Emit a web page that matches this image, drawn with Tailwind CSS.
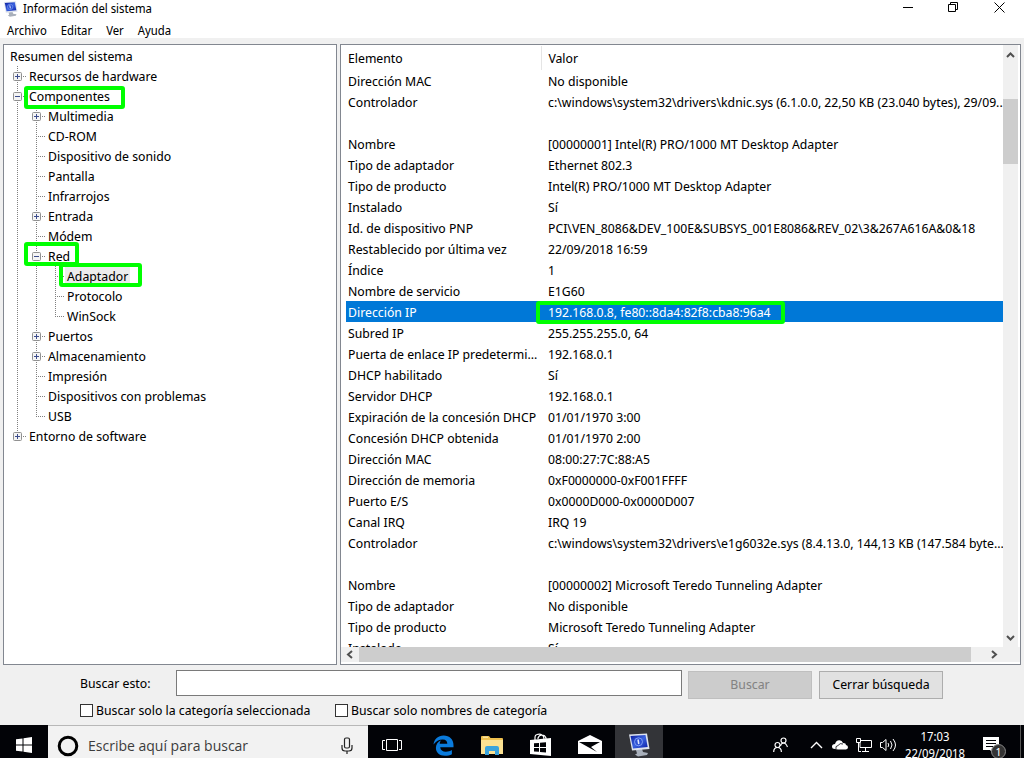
<!DOCTYPE html>
<html lang="es">
<head>
<meta charset="utf-8">
<title>Información del sistema</title>
<script src="https://cdn.jsdelivr.net/npm/@tailwindcss/browser@4"></script>
</head>
<body class="flex h-screen flex-col overflow-hidden bg-[#f0f0f0] font-['Noto_Sans_Display','Open_Sans',sans-serif] text-[13px] text-black">

<svg class="absolute size-0" aria-hidden="true">
  <defs>
    <linearGradient id="screen" x1="0" y1="0" x2="1" y2="1">
      <stop offset="0" stop-color="#0a1c9c"/><stop offset=".5" stop-color="#3a62e0"/><stop offset="1" stop-color="#0a20a8"/>
    </linearGradient>
    <symbol id="pc" viewBox="0 0 22 24">
      <path d="M8 17l6-1 1 3 5 1-1 2-9 1.500-3-2 2-1z" fill="#a9b0bb"/>
      <path d="M1 1.500L19 .5l2.500 15.500L4 17.500z" fill="#dde3ee"/>
      <path d="M2.500 3L17.500 2l2.200 12L5 15.500z" fill="url(#screen)"/>
      <circle cx="10.500" cy="8.800" r="4" fill="#2c50d4" stroke="#7f9df2"/>
      <path d="M10 6.500l.8 4.500" stroke="#dfe7ff" stroke-width="1.500"/>
    </symbol>
    <symbol id="g-v" viewBox="0 0 19 20"><path d="M9.500 0V20" stroke="#808080" stroke-dasharray="1 1"/></symbol>
    <symbol id="g-t" viewBox="0 0 19 20"><path d="M9.500 0V20M9 10.500H18" stroke="#808080" stroke-dasharray="1 1"/></symbol>
    <symbol id="g-l" viewBox="0 0 19 20"><path d="M9.500 0V11M9 10.500H18" stroke="#808080" stroke-dasharray="1 1"/></symbol>
    <symbol id="g-box" viewBox="0 0 19 20"><rect x="5.500" y="6.500" width="8" height="8" rx="1" fill="#f4f4f4" stroke="#919191"/><path d="M7 10.500h5" stroke="#3c4c8c"/></symbol>
    <symbol id="g-plus" viewBox="0 0 19 20"><path d="M9.500 8v5" stroke="#3c4c8c"/></symbol>
  </defs>
</svg>

<header class="bg-white">
  <div class="flex h-[18px] items-center pl-[3px]">
    <svg class="mr-[5px] h-4 w-[15px]"><use href="#pc"/></svg>
    <h1 class="flex-1 text-xs">Información del sistema</h1>
    <div class="flex h-full pr-px">
      <button aria-label="Minimizar" class="flex w-[45px] justify-center"><svg class="h-[15px] w-[11px]" viewBox="0 0 11 15"><path d="M0 7.500h10" stroke="#000"/></svg></button>
      <button aria-label="Restaurar" class="flex w-[45px] justify-center"><svg class="h-[15px] w-[11px]" viewBox="0 0 11 15" fill="none" stroke="#000"><path d="M.5 4.500h7v7h-7zM2.500 4V2.500h7v7H8"/></svg></button>
      <button aria-label="Cerrar" class="flex w-[47px] justify-center"><svg class="h-[15px] w-[11px]" viewBox="0 0 11 15"><path d="M.5 2.500l10 10M10.500 2.500l-10 10" stroke="#000"/></svg></button>
    </div>
  </div>
  <nav class="flex h-5 items-center gap-[14px] pt-[5px] pl-[7px] text-xs">
    <button>Archivo</button><button>Editar</button><button>Ver</button><button>Ayuda</button>
  </nav>
</header>

<main class="flex min-h-0 flex-1 gap-[3px] px-[3px] pt-[6px]">
  <section aria-label="Categorías" class="w-[334px] shrink-0 border border-[#828790] bg-white pt-px">
    <ul id="tree" role="tree"></ul>
  </section>

  <section aria-label="Detalles" class="flex min-w-0 flex-1 flex-col border border-[#828790] bg-white">
    <div class="flex min-h-0 flex-1">
      <div class="min-w-0 flex-1 overflow-hidden pt-px pl-[5px]">
        <table class="w-full table-fixed border-collapse text-left whitespace-nowrap">
          <colgroup><col class="w-[195px]"><col></colgroup>
          <thead><tr class="h-6"><th class="p-0 pt-[2px] pl-[2px] font-normal">Elemento</th><th class="border-l border-[#e5e5e5] p-0 pt-[2px] pl-[7px] font-normal">Valor</th></tr></thead>
          <tbody id="rows"></tbody>
        </table>
      </div>
      <div class="mr-[2px] flex w-[15px] shrink-0 flex-col items-center bg-[#f0f0f0]">
        <svg class="h-5 w-[9px]" viewBox="0 0 9 20"><path d="M1 12l3.500-3.500L8 12" fill="none" stroke="#505050" stroke-width="2"/></svg>
        <div class="mt-[34px] h-[65px] w-full bg-[#cdcdcd]"></div>
        <svg class="mt-auto h-[18px] w-[9px]" viewBox="0 0 9 18"><path d="M1 7l3.500 3.500L8 7" fill="none" stroke="#505050" stroke-width="2"/></svg>
      </div>
    </div>
    <div class="mb-[2px] flex h-[15px] shrink-0 items-center bg-[#f0f0f0]">
      <svg class="h-[9px] w-[18px]" viewBox="0 0 18 9"><path d="M11 1L7 4.500 11 8" fill="none" stroke="#505050" stroke-width="2"/></svg>
      <div class="h-full flex-1 bg-[#cdcdcd]"></div>
      <svg class="mr-[17px] h-[9px] w-8" viewBox="0 0 32 9"><path d="M21 1l4 3.500L21 8" fill="none" stroke="#505050" stroke-width="2"/></svg>
    </div>
  </section>
</main>

<form class="h-[60px] shrink-0 pt-[5px] pr-[81px] pl-20">
  <div class="flex items-start">
    <label for="q" class="w-24 leading-[26px]">Buscar esto:</label>
    <input id="q" type="text" class="h-[26px] min-w-0 flex-1 border border-[#7a7a7a] bg-white px-1 outline-none">
    <button type="button" disabled class="mt-px ml-[6px] h-7 w-[124px] border border-[#bfbfbf] bg-[#cccccc] text-[#838383]">Buscar</button>
    <button type="button" class="mt-px ml-[7px] h-7 w-[124px] border border-[#adadad] bg-[#e1e1e1]">Cerrar búsqueda</button>
  </div>
  <div class="flex items-center pt-[2px]">
    <label class="flex w-[255px] items-center gap-[3px] whitespace-nowrap"><input type="checkbox" class="size-[13px] appearance-none border border-[#333] bg-white">Buscar solo la categoría seleccionada</label>
    <label class="flex items-center gap-[3px] whitespace-nowrap"><input type="checkbox" class="size-[13px] appearance-none border border-[#333] bg-white">Buscar solo nombres de categoría</label>
  </div>
</form>

<footer class="flex h-[33px] shrink-0 overflow-hidden bg-[#020307] text-white">
  <button aria-label="Inicio" class="flex h-10 w-12 items-center justify-center"><svg class="size-4" viewBox="0 0 16 16" fill="#fff"><path d="M0 2.300l6.500-.9v6.100H0zM7.500 1.200L16 0v7.500H7.500zM0 8.500h6.500v6.100L0 13.700zM7.500 8.500H16V16l-8.500-1.200z"/></svg></button>
  <div class="flex h-10 w-80 items-center border-t border-[#b8b8b8] bg-[#f2f2f2] pr-[13px] pl-[9px]">
    <svg class="mr-[9px] size-[22px] shrink-0" viewBox="0 0 22 22"><circle cx="11" cy="11" r="8.800" fill="none" stroke="#000" stroke-width="3"/></svg>
    <input type="text" aria-label="Buscar en Windows" placeholder="Escribe aquí para buscar" class="min-w-0 flex-1 font-['Open_Sans',sans-serif] text-sm text-black outline-none placeholder:text-[#3c3c3c]">
    <svg class="h-[18px] w-4 shrink-0" viewBox="0 0 16 18" fill="none" stroke="#222" stroke-width="1.200"><rect x="5.500" y="1" width="5" height="10" rx="1.500"/><path d="M3 8v3q0 3 3 3h4q3 0 3-3V8M8 14v3"/></svg>
  </div>
  <div class="flex h-10 flex-1 gap-px">
    <button aria-label="Vista de tareas" class="flex w-[50px] items-center pl-[14px]"><svg class="h-[14px] w-5" viewBox="0 0 20 14" fill="none" stroke="#fff"><path d="M4.500 1.500h11v11h-11zM3 2.500H.5v9H3M17 2.500h2.500v9H17"/></svg></button>
    <button aria-label="Microsoft Edge" class="flex w-12 items-center justify-center"><svg class="size-[21px]" viewBox="0 0 21 21"><path d="M.5 9.500C1.200 4 5 .5 10.600.5c6 0 9.900 4 9.900 9.600v2.200H7.200c.2 3 2.500 4.400 5.700 4.400 2.300 0 4.300-.6 6-1.700v4.200c-2 1.100-4.300 1.600-7 1.600-5.700 0-9-3.300-9-8 0-3.500 2-6.200 5.300-7.600-1 1-1.400 2.200-1.500 3.500h7.600c0-2.600-1.400-4.300-4.500-4.300C6 4.400 2.700 6.200.5 9.500z" fill="#0a7bdc"/></svg></button>
    <button aria-label="Explorador de archivos" class="flex w-12 items-center justify-center"><svg class="h-[19px] w-[22px]" viewBox="0 0 22 19"><path d="M0 1q0-1 1-1h7l1.500 2H21q1 0 1 1v14H0z" fill="#f0c14f"/><path d="M0 4h22v14H0z" fill="#fbe192"/><path d="M2 1.200h5" stroke="#fff2c0"/><path d="M4 19v-7q0-2 2-2h10q2 0 2 2v7h-4v-4H8v4z" fill="#3aa3dc"/></svg></button>
    <button aria-label="Microsoft Store" class="flex w-12 items-center justify-center"><svg class="h-6 w-[22px]" viewBox="0 0 22 24"><path d="M5 7V4q0-2 2-2.500Q10 .4 12 2q2 1 2 4M8 6V5q1-3 4-3t4 3v2" fill="none" stroke="#fff" stroke-width="1.200"/><path d="M0 7l21-2v18L0 21z" fill="#fff"/><path d="M4 10.300l5-.4v4H4zM10 9.800l6-.5v4.600h-6zM4 15h5v3.800l-5-.4zM10 15h6v4.400l-6-.5z" fill="#020307"/></svg></button>
    <button aria-label="Correo" class="flex w-12 items-center justify-center"><svg class="h-5 w-6" viewBox="0 0 24 20"><path d="M0 6L12 0l12 6v13H0z" fill="#fff"/><path d="M1 7h21l-9 5 6 5z" fill="#020307"/></svg></button>
    <button aria-label="Información del sistema" class="flex w-12 items-center justify-center bg-[#333438]"><svg class="h-6 w-[22px]"><use href="#pc"/></svg></button>
  </div>
  <div class="flex h-10 items-center">
    <svg class="mr-[22px] h-4 w-[15px]" viewBox="0 0 15 16" fill="none" stroke="#fff" stroke-width="1.200"><circle cx="10.500" cy="3.500" r="2.500"/><path d="M7.500 9q.5-3 3-3t4 4"/><circle cx="4.500" cy="8" r="2.500"/><path d="M.7 15q0-4.500 3.800-4.500T8.400 15"/></svg>
    <svg class="mr-[9px] h-2 w-[13px]" viewBox="0 0 13 8"><path d="M1 7l5.500-5.500L12 7" fill="none" stroke="#fff" stroke-width="1.400"/></svg>
    <svg class="mr-2 h-[10px] w-4" viewBox="0 0 16 10"><path d="M3 9Q0 9 0 6.500T3 4Q4 0 7.500.2 10 .3 11 3q3-.2 3 2 2 .3 2 2.300T14 9.500H6z" fill="#fff"/><path d="M4 9Q3 6 6 5.500q2-3 5-1.500" fill="none" stroke="#020307" stroke-width=".8"/></svg>
    <svg class="mr-2 h-[14px] w-4" viewBox="0 0 16 14" fill="none" stroke="#fff"><path d="M5 2.500h10.500v7H4V5M9.500 10v3M6 13.500h7M.5.500h4v4h-4zM2.500 5v8.500H5"/></svg>
    <svg class="h-[14px] w-[17px]" viewBox="0 0 17 14" fill="none" stroke="#fff"><path d="M.5 4.500h2L6 1.500v11l-3.500-3h-2zM8 5q1.500 2 0 4M10.500 3q3 4 0 8M13 1q5 6 0 12"/></svg>
    <div class="ml-1 flex w-[68px] flex-col items-center text-xs leading-[17px]"><span>17:03</span><span>22/09/2018</span></div>
    <button aria-label="Notificaciones" class="relative ml-[14px] h-full w-[37px]">
      <svg class="mt-px h-[18px] w-4" viewBox="0 0 16 18"><path d="M0 0h16v13h-5v4l-4-4H0z" fill="#fff"/><path d="M3 3.500h10M3 6.500h10M3 9.500h7" stroke="#020307"/></svg>
      <span class="absolute top-[19px] left-2 flex size-[15px] items-center justify-center rounded-full border border-[#888] bg-[#333] text-[11px] leading-none">1</span>
    </button>
    <div class="mr-[3px] h-full w-px bg-[#555]"></div>
  </div>
</footer>

<script>
  // [guides, toggle, label, ring classes]; guides: v = line, t = branch, l = last branch
  const tree = [
    ['', '', 'Resumen del sistema'],
    ['t', '+', 'Recursos de hardware'],
    ['t', '-', 'Componentes', 'top-0 left-5 h-[23px] w-[101px]'],
    ['vt', '+', 'Multimedia'], ['vt', '', 'CD-ROM'], ['vt', '', 'Dispositivo de sonido'],
    ['vt', '', 'Pantalla'], ['vt', '', 'Infrarrojos'], ['vt', '+', 'Entrada'], ['vt', '', 'Módem'],
    ['vt', '-', 'Red', '-top-1 left-5 h-6 w-[55px]'],
    ['vvt', '', 'Adaptador', '-top-[3px] left-[55px] h-6 w-[83px]'],
    ['vvt', '', 'Protocolo'], ['vvl', '', 'WinSock'],
    ['vt', '+', 'Puertos'], ['vt', '+', 'Almacenamiento'], ['vt', '', 'Impresión'],
    ['vt', '', 'Dispositivos con problemas'], ['vl', '', 'USB'],
    ['l', '+', 'Entorno de software']
  ];
  const ring = c => c ? `<span class="pointer-events-none absolute z-10 rounded-[3px] border-4 border-[#00ff00] ${c}"></span>` : '';
  document.getElementById('tree').innerHTML = tree.map(([g, t, label, c]) => {
    const cells = [...g].map((k, i) =>
      `<svg class="h-5 w-[19px] shrink-0"><use href="#g-${k}"/>${i === g.length - 1 && t ? '<use href="#g-box"/>' + (t === '+' ? '<use href="#g-plus"/>' : '') : ''}</svg>`).join('');
    return `<li role="treeitem" aria-level="${g.length + 1}" class="relative flex h-5 items-center pl-1">${cells}<span class="px-[2px] leading-5 whitespace-nowrap ${label === 'Adaptador' ? 'bg-[#ececec]' : ''}">${label}</span>${ring(c)}</li>`;
  }).join('');

  const rows = [
    ['Dirección MAC', 'No disponible'],
    ['Controlador', 'c:\\windows\\system32\\drivers\\kdnic.sys (6.1.0.0, 22,50 KB (23.040 bytes), 29/09...'],
    ['', ''],
    ['Nombre', '[00000001] Intel(R) PRO/1000 MT Desktop Adapter'],
    ['Tipo de adaptador', 'Ethernet 802.3'],
    ['Tipo de producto', 'Intel(R) PRO/1000 MT Desktop Adapter'],
    ['Instalado', 'Sí'],
    ['Id. de dispositivo PNP', 'PCI\\VEN_8086&amp;DEV_100E&amp;SUBSYS_001E8086&amp;REV_02\\3&amp;267A616A&amp;0&amp;18'],
    ['Restablecido por última vez', '22/09/2018 16:59'],
    ['Índice', '1'],
    ['Nombre de servicio', 'E1G60'],
    ['Dirección IP', '192.168.0.8, fe80::8da4:82f8:cba8:96a4'],
    ['Subred IP', '255.255.255.0, 64'],
    ['Puerta de enlace IP predetermi...', '192.168.0.1'],
    ['DHCP habilitado', 'Sí'],
    ['Servidor DHCP', '192.168.0.1'],
    ['Expiración de la concesión DHCP', '01/01/1970 3:00'],
    ['Concesión DHCP obtenida', '01/01/1970 2:00'],
    ['Dirección MAC', '08:00:27:7C:88:A5'],
    ['Dirección de memoria', '0xF0000000-0xF001FFFF'],
    ['Puerto E/S', '0x0000D000-0x0000D007'],
    ['Canal IRQ', 'IRQ 19'],
    ['Controlador', 'c:\\windows\\system32\\drivers\\e1g6032e.sys (8.4.13.0, 144,13 KB (147.584 byte...'],
    ['', ''],
    ['Nombre', '[00000002] Microsoft Teredo Tunneling Adapter'],
    ['Tipo de adaptador', 'No disponible'],
    ['Tipo de producto', 'Microsoft Teredo Tunneling Adapter'],
    ['Instalado', 'Sí']
  ];
  document.getElementById('rows').innerHTML = rows.map(([a, b]) => {
    const on = a === 'Dirección IP';
    return `<tr class="h-[21px] leading-5 ${on ? 'bg-[#0078d7] text-white' : ''}"><td class="p-0 pl-[2px]">${a}</td><td class="relative p-0 pl-[7px]">${b}${on ? ring('top-0 -left-[5px] h-[23px] w-[249px]') : ''}</td></tr>`;
  }).join('');
</script>
</body>
</html>
